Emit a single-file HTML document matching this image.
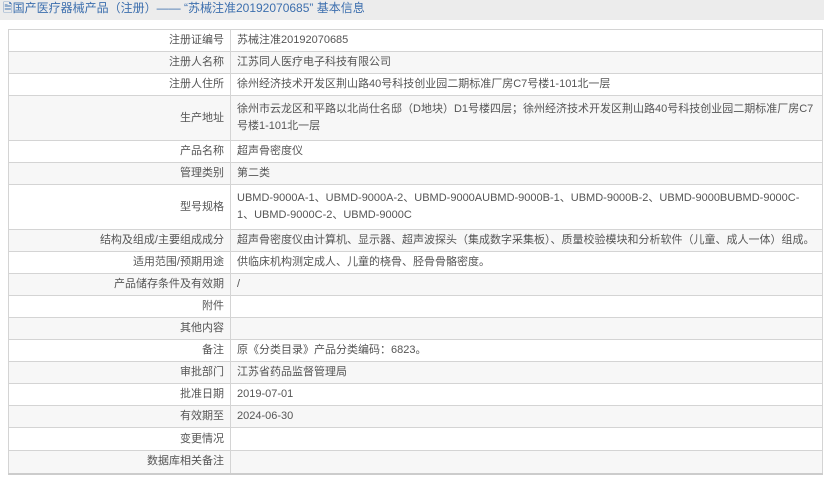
<!DOCTYPE html>
<html><head><meta charset="utf-8"><style>
body{margin:0;width:824px;height:481px;background:#fff;font-family:"Liberation Sans","Noto Sans CJK SC",sans-serif;overflow:hidden}
.hd{height:20px;background:#ececec;color:#3d6fae;font-size:12px;line-height:16px;padding-left:3px;white-space:nowrap}
table{position:absolute;left:8px;top:29px;width:815px;border-collapse:collapse;font-size:11px;color:#555;border-bottom:2px solid #ccc;table-layout:fixed}
td{border:1px solid #d4d4d4;height:22px;padding:0 6px;line-height:17px;box-sizing:border-box;overflow:hidden}
td.l{width:222px;text-align:right;padding-right:6px}
tr{height:22px}
tr:nth-child(even) td{background:#f7f7f7}
tr.t,.t td{height:45px}
tr.u,.u td{height:23px}
</style></head><body>
<div class="hd">&#128462;国产医疗器械产品（注册）—— “苏械注准20192070685” 基本信息</div>
<table>
<tr><td class="l">注册证编号</td><td>苏械注准20192070685</td></tr>
<tr><td class="l">注册人名称</td><td>江苏同人医疗电子科技有限公司</td></tr>
<tr><td class="l">注册人住所</td><td>徐州经济技术开发区荆山路40号科技创业园二期标准厂房C7号楼1-101北一层</td></tr>
<tr class="t"><td class="l">生产地址</td><td>徐州市云龙区和平路以北尚仕名邸（D地块）D1号楼四层；徐州经济技术开发区荆山路40号科技创业园二期标准厂房C7号楼1-101北一层</td></tr>
<tr><td class="l">产品名称</td><td>超声骨密度仪</td></tr>
<tr><td class="l">管理类别</td><td>第二类</td></tr>
<tr class="t"><td class="l">型号规格</td><td style="word-break:break-all">UBMD-9000A-1、UBMD-9000A-2、UBMD-9000AUBMD-9000B-1、UBMD-9000B-2、UBMD-9000BUBMD-9000C-1、UBMD-9000C-2、UBMD-9000C</td></tr>
<tr><td class="l">结构及组成/主要组成成分</td><td style="white-space:nowrap">超声骨密度仪由计算机、显示器、超声波探头（集成数字采集板）、质量校验模块和分析软件（儿童、成人一体）组成。</td></tr>
<tr><td class="l">适用范围/预期用途</td><td>供临床机构测定成人、儿童的桡骨、胫骨骨骼密度。</td></tr>
<tr><td class="l">产品储存条件及有效期</td><td>/</td></tr>
<tr><td class="l">附件</td><td></td></tr>
<tr><td class="l">其他内容</td><td></td></tr>
<tr><td class="l">备注</td><td>原《分类目录》产品分类编码：6823。</td></tr>
<tr><td class="l">审批部门</td><td>江苏省药品监督管理局</td></tr>
<tr><td class="l">批准日期</td><td>2019-07-01</td></tr>
<tr><td class="l">有效期至</td><td>2024-06-30</td></tr>
<tr class="u"><td class="l">变更情况</td><td></td></tr>
<tr class="u"><td class="l">数据库相关备注</td><td></td></tr>
</table>
</body></html>
